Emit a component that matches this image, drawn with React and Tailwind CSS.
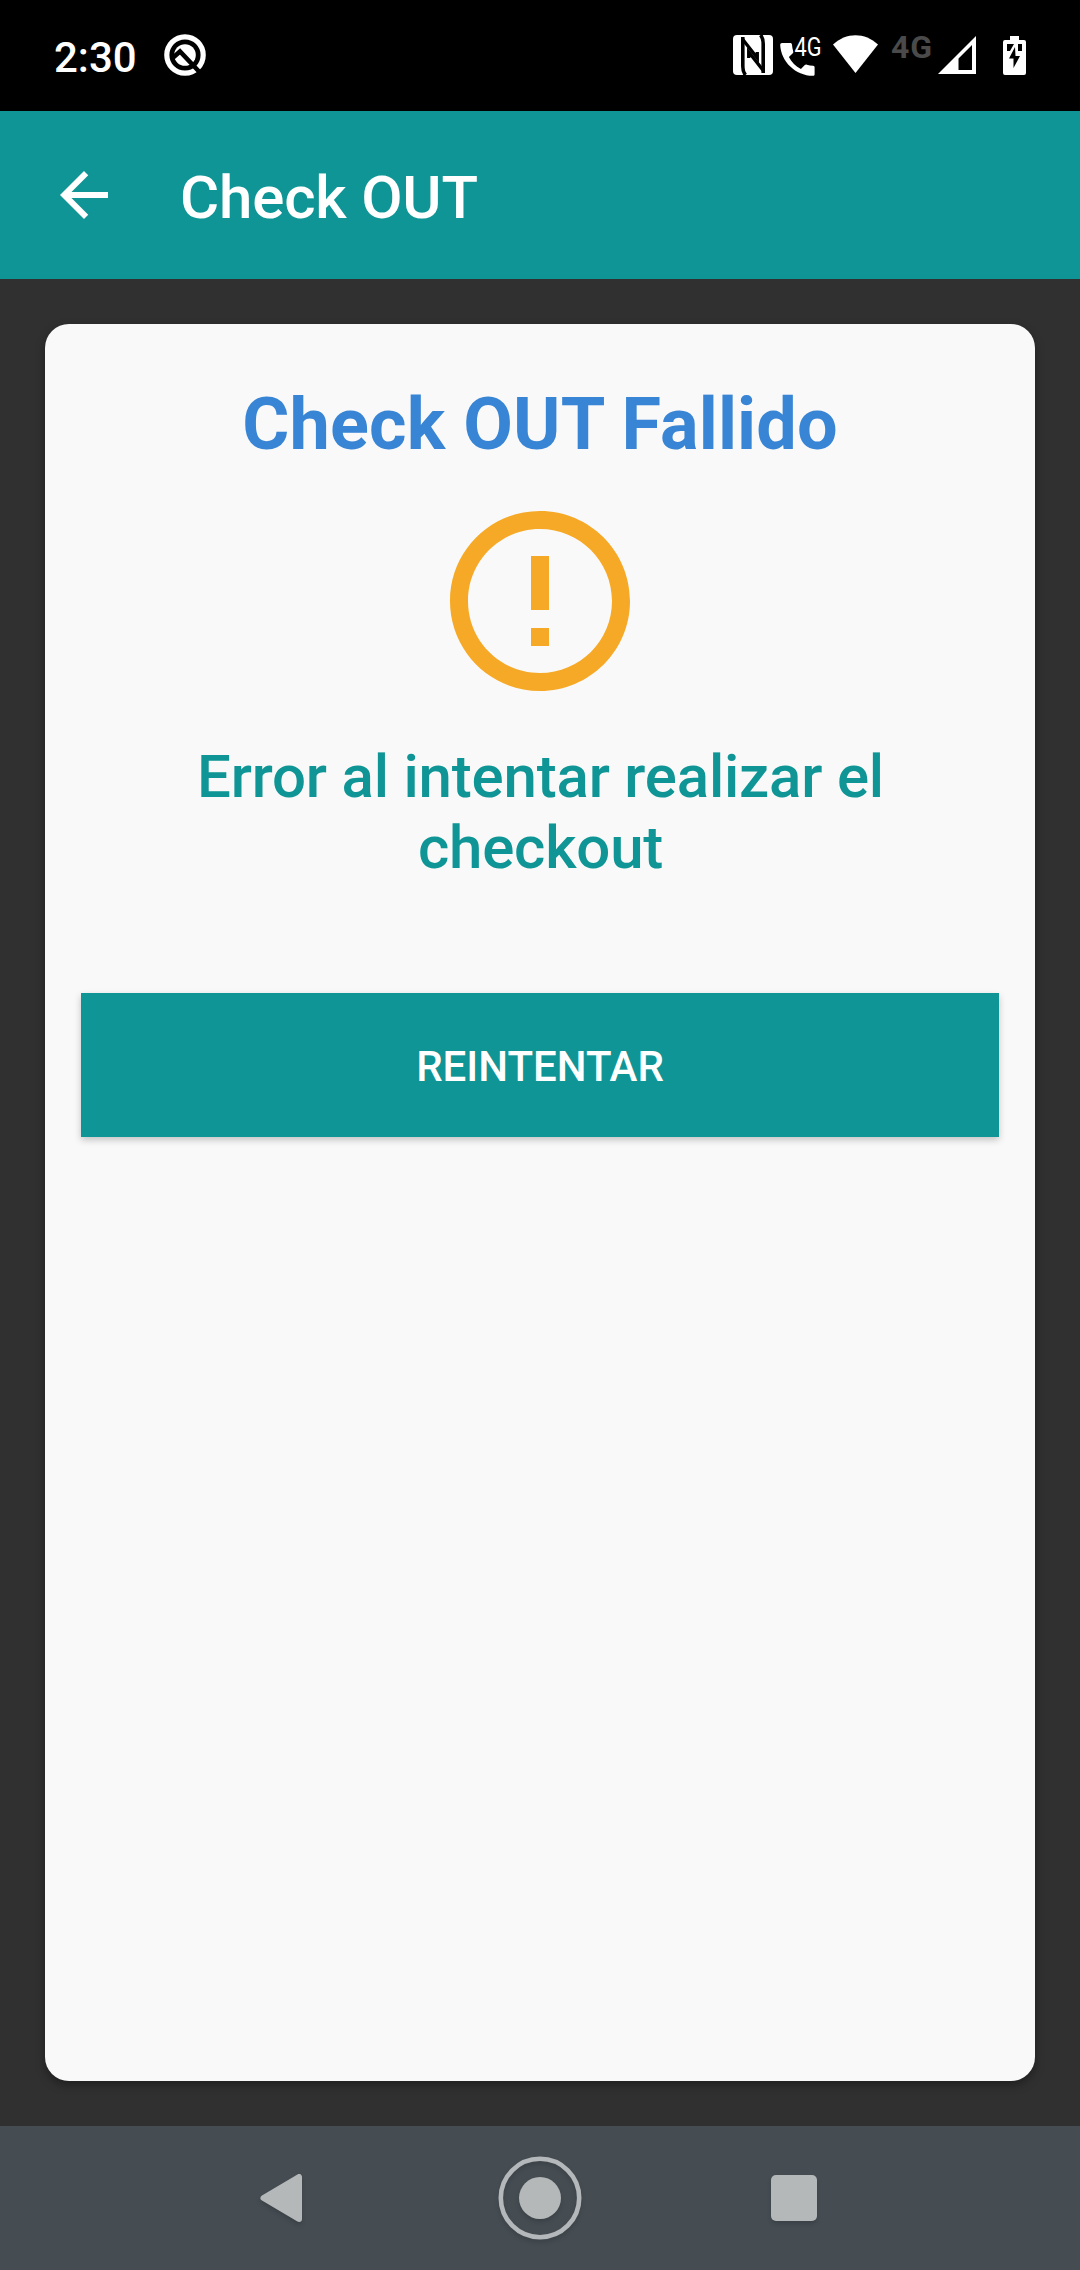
function QIcon() {
  return (
    <svg className="ml-[27px] mt-[33px]" width="44" height="44" viewBox="0 0 44 44">
      <circle cx="22" cy="22" r="18.2" fill="none" stroke="#fff" strokeWidth="5.2" />
      <circle cx="22" cy="22" r="10.8" fill="#fff" />
      <path d="M9 25.500L17 18.500L36 38.500" fill="none" stroke="#000" strokeWidth="4.6" />
    </svg>
  );
}

function NfcIcon() {
  return (
    <svg className="mt-[35px] shrink-0" width="40" height="40" viewBox="0 0 40 40">
      <rect width="40" height="40" rx="4" fill="#fff" />
      <path d="M9.800 2V31Q9.800 37 12.500 40M30.200 38V9Q30.200 3 27.500 0" fill="none" stroke="#000" strokeWidth="3.600" />
      <path d="M9.800 4.500L24.300 23V17" fill="none" stroke="#000" strokeWidth="3.300" />
      <path d="M30.200 35.500L15.700 17V23" fill="none" stroke="#000" strokeWidth="3.300" />
    </svg>
  );
}

function CallIcon() {
  return (
    <svg className="ml-[7px] mr-[-12px] mt-[27px] shrink-0" width="56" height="50" viewBox="0 -8 56 50">
      <path
        d="M2 8h8.200c1.100 0 1.700.7 1.800 1.700.2 2.300.5 4.500 1.200 6.500.3.800.1 1.500-.4 2.100L8.900 22c2.800 5.400 6.700 9.200 12 12l3.900-3.900c.6-.6 1.300-.7 2-.4 2.100.7 4.200 1 6.300 1.100 1 0 1.500.7 1.500 1.700v6.800c0 1-.6 1.500-1.700 1.500C15.500 40.800 1 26.500.2 10 .2 8.800.9 8 2 8z"
        fill="#fff"
      />
      <text x="14.500" y="20.500" fill="#fff" fontFamily="Roboto, sans-serif" fontSize="26" textLength="27" lengthAdjust="spacingAndGlyphs">4G</text>
    </svg>
  );
}

function BatteryIcon() {
  return (
    <svg className="ml-[27px] mt-[36px] shrink-0" width="23" height="39" viewBox="0 0 23 39">
      <path d="M7 0h9v4h5a2 2 0 0 1 2 2v31a2 2 0 0 1-2 2H2a2 2 0 0 1-2-2V6a2 2 0 0 1 2-2h5z" fill="#fff" />
      <path d="M4 8h7L7 15H4zM15 8h4v7h-4z" fill="#000" />
      <path d="M12 11L6 22.500H10.500V32L17 20H12.500z" fill="#000" />
    </svg>
  );
}

function StatusBar() {
  return (
    <div className="flex h-[111px] shrink-0 items-start justify-between bg-black pl-[54px] pr-[54px] text-white">
      <div className="flex items-start">
        <span className="mt-[33px] w-[82px] text-[42px] leading-[49px] font-medium">2:30</span>
        <QIcon />
      </div>
      <div className="flex items-start">
        <NfcIcon />
        <CallIcon />
        <svg className="ml-[9px] mt-[35px] shrink-0" width="45" height="38" viewBox="0 0 45 38">
          <path d="M0 9.500C13-3 32-3 45 9.500L22.500 38z" fill="#fff" />
        </svg>
        <span className="ml-[13px] mt-[29px] w-[47px] text-[32px] leading-[37px] font-bold tracking-[0.8px] text-[#4a4a4a]">4G</span>
        <svg className="mt-[36px] shrink-0" width="38" height="38" viewBox="0 0 38 38">
          <path d="M38 0v38H0zM34 9L20.500 22.500V34H34z" fill="#fff" fillRule="evenodd" />
        </svg>
        <BatteryIcon />
      </div>
    </div>
  );
}

function NavBar() {
  return (
    <nav className="flex h-[144px] shrink-0 items-center justify-center bg-[#454d53]">
      <div className="flex w-[254px] justify-center">
        <svg width="60" height="72" viewBox="0 0 60 72" className="mr-[10px] drop-shadow-[0_3px_2px_rgba(0,0,0,0.15)]">
          <path d="M12.500 36L48 15V57z" fill="#b4b8b9" stroke="#b4b8b9" strokeWidth="6" strokeLinejoin="round" />
        </svg>
      </div>
      <div className="flex w-[254px] justify-center">
        <svg width="90" height="90" viewBox="0 0 90 90" className="drop-shadow-[0_3px_2px_rgba(0,0,0,0.15)]">
          <circle cx="45" cy="45" r="39.200" fill="none" stroke="#b4b8bb" strokeWidth="4.600" />
          <circle cx="45" cy="45" r="21" fill="#b4b8b9" />
        </svg>
      </div>
      <div className="flex w-[254px] justify-center">
        <div className="h-[46px] w-[46px] rounded-[5px] bg-[#b4b8b9] shadow-[0_3px_4px_rgba(0,0,0,0.15)]" />
      </div>
    </nav>
  );
}

export default function App() {
  return (
    <div className="flex h-[2270px] w-[1080px] flex-col bg-[#303030] font-[Roboto,sans-serif]">
      <StatusBar />
      <header className="flex h-[168px] shrink-0 items-center bg-[#0f9595] pl-[48px] text-white">
        <svg width="72" height="72" viewBox="0 0 24 24" fill="#fff" className="shrink-0">
          <path d="M20 11H7.830l5.590-5.590L12 4l-8 8 8 8 1.410-1.410L7.830 13H20v-2z" />
        </svg>
        <h1 className="ml-[60px] pt-[5px] text-[60px] leading-[70px] font-medium tracking-[-0.17px]">Check OUT</h1>
      </header>
      <main className="flex grow p-[45px]">
        <section className="flex grow flex-col items-center rounded-[24px] bg-[#f9f9f9] px-[36px] pt-[59px] shadow-[0_4px_10px_rgba(0,0,0,0.35)]">
          <h2 className="text-[72px] leading-[84px] font-bold tracking-[0.14px] text-[#3885d5]">Check OUT Fallido</h2>
          <svg className="mt-[26px]" width="216" height="216" viewBox="0 0 24 24" fill="#f6a926">
            <path d="M11 15h2v2h-2zm0-8h2v6h-2zm.990-5C6.470 2 2 6.480 2 12s4.470 10 9.990 10C17.520 22 22 17.520 22 12S17.520 2 11.990 2zM12 20c-4.420 0-8-3.580-8-8s3.580-8 8-8 8 3.580 8 8-3.580 8-8 8z" />
          </svg>
          <p className="mt-[32px] w-[760px] pl-[1px] text-center text-[60px] leading-[71px] font-medium tracking-[-0.2px] text-[#0f9595]">
            Error al intentar realizar el checkout
          </p>
          <button className="mt-[110px] h-[144px] w-full bg-[#0f9595] pt-[3px] text-[42px] font-medium text-white shadow-[0_3px_7px_rgba(0,0,0,0.22)]">
            REINTENTAR
          </button>
        </section>
      </main>
      <NavBar />
    </div>
  );
}
